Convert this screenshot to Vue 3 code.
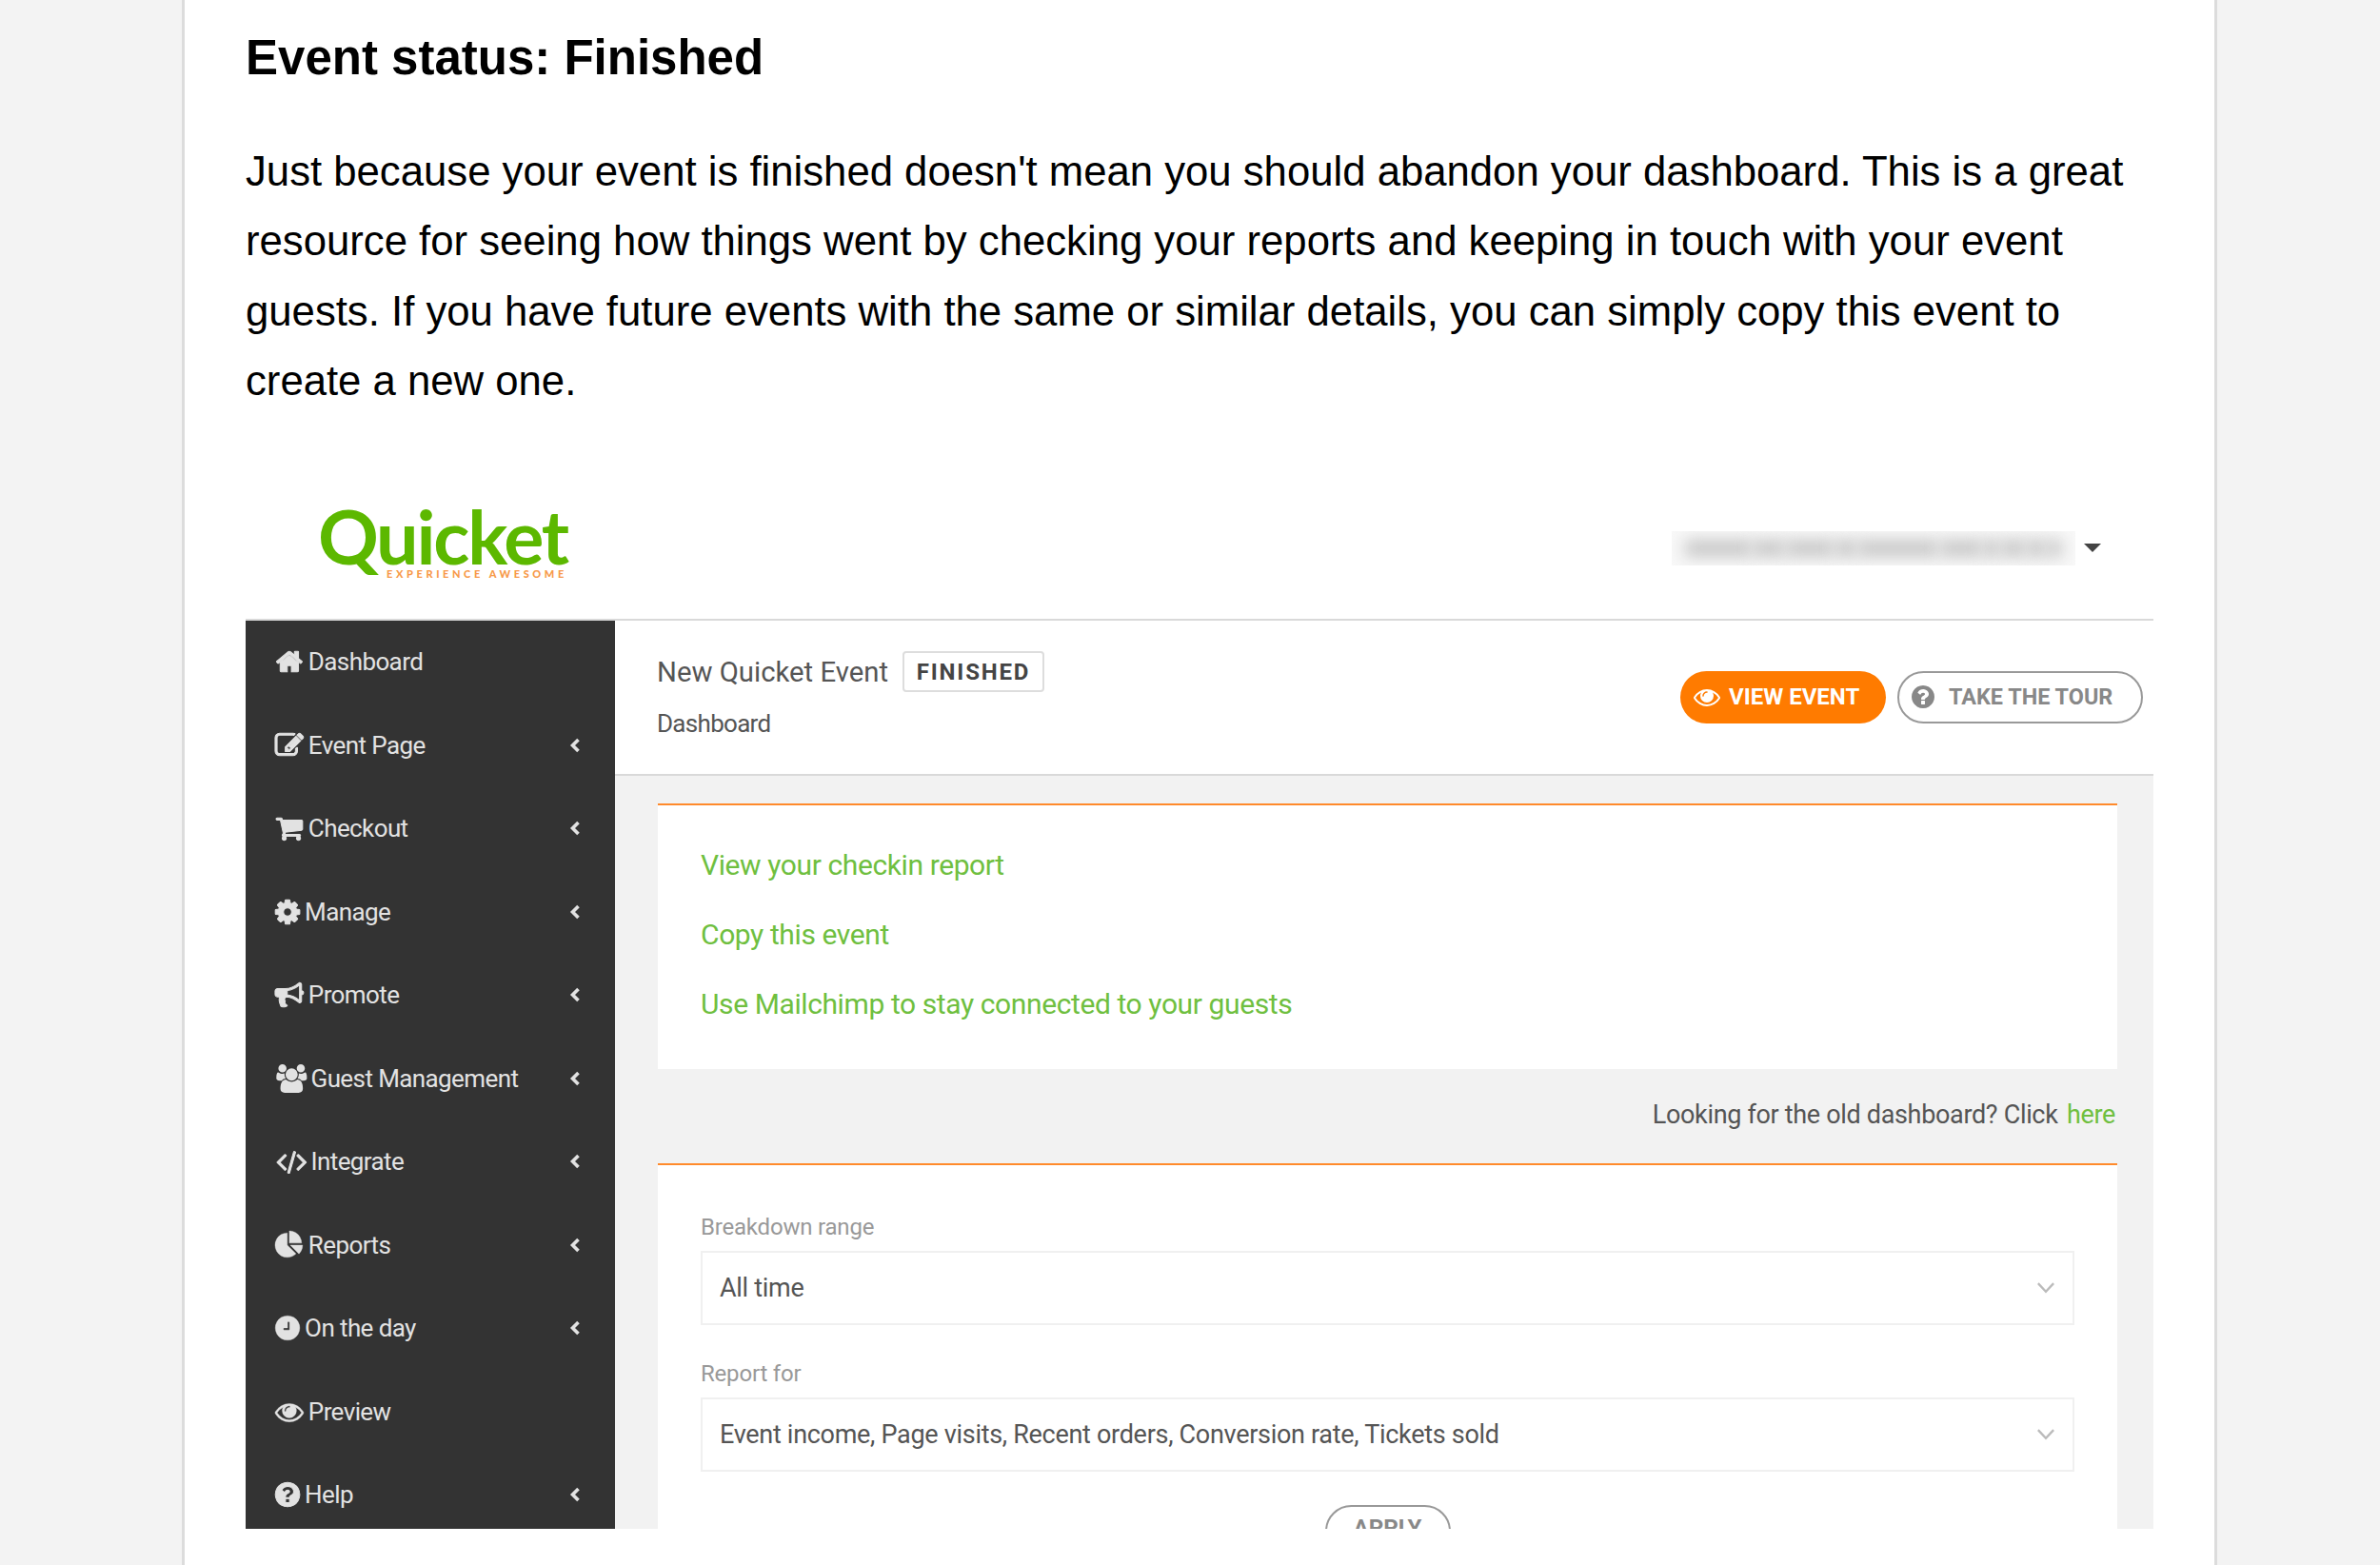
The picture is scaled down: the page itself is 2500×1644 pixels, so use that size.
<script setup>
const P = {
  home: 'M1472 992v480q0 26-19 45t-45 19h-384v-384h-256v384h-384q-26 0-45-19t-19-45v-480q0-1 .5-3t.5-3l575-474 575 474q1 2 1 6zm223-69l-62 74q-8 9-21 11h-3q-13 0-21-7l-692-577-692 577q-12 8-24 7-13-2-21-11l-62-74q-8-10-7-23.5t11-21.5l719-599q32-26 76-26t76 26l244 204v-195q0-14 9-23t23-9h192q14 0 23 9t9 23v408l219 182q10 8 11 21.5t-7 23.5z',
  edit: 'M888 1184l116-116-152-152-116 116v56h96v96h56zm440-720q-16-16-33 1l-350 350q-17 17-1 33t33-1l350-350q17-17 1-33zm80 594v190q0 119-84.5 203.5t-203.5 84.5h-832q-119 0-203.5-84.5t-84.5-203.5v-832q0-119 84.5-203.5t203.5-84.5h832q63 0 117 25 15 7 18 23 3 17-9 29l-49 49q-14 14-32 8-23-6-45-6h-832q-66 0-113 47t-47 113v832q0 66 47 113t113 47h832q66 0 113-47t47-113v-126q0-13 9-22l64-64q15-15 35-7t20 29zm-96-738l288 288-672 672h-288v-288zm444 132l-92 92-288-288 92-92q28-28 68-28t68 28l152 152q28 28 28 68t-28 68z',
  cart: 'M704 1536q0 52-38 90t-90 38-90-38-38-90 38-90 90-38 90 38 38 90zm896 0q0 52-38 90t-90 38-90-38-38-90 38-90 90-38 90 38 38 90zm128-1088v512q0 24-16.5 42.5t-40.5 21.5l-1044 122q13 60 13 70 0 16-24 64h920q26 0 45 19t19 45-19 45-45 19h-1024q-26 0-45-19t-19-45q0-11 8-31.5t16-36 21.5-40 15.5-29.5l-177-823h-204q-26 0-45-19t-19-45 19-45 45-19h256q16 0 28.5 6.5t19.5 15.5 13 24.5 8 26 5.5 29.5 4.5 26h1201q26 0 45 19t19 45z',
  cog: 'M1152 896q0-106-75-181t-181-75-181 75-75 181 75 181 181 75 181-75 75-181zm512-109v222q0 12-8 23t-20 13l-185 28q-19 54-39 91 35 50 107 138 10 12 10 25t-9 23q-27 37-99 108t-94 71q-12 0-26-9l-138-108q-44 23-91 38-16 136-29 186-7 28-36 28h-222q-14 0-24.5-8.5t-11.5-21.5l-28-184q-49-16-90-37l-141 107q-10 9-25 9-14 0-25-11-126-114-165-168-7-10-7-23 0-12 8-23 15-21 51-66.5t54-70.5q-27-50-41-99l-183-27q-13-2-21-12.5t-8-23.5v-222q0-12 8-23t19-13l186-28q14-46 39-92-40-57-107-138-10-12-10-24 0-10 9-23 26-36 98.5-107.5t94.5-71.5q13 0 26 10l138 107q44-23 91-38 16-136 29-186 7-28 36-28h222q14 0 24.5 8.5t11.5 21.5l28 184q49 16 90 37l142-107q9-9 24-9 13 0 25 10 129 119 165 170 7 8 7 22 0 12-8 23-15 21-51 66.5t-54 70.5q26 50 41 98l183 28q13 2 21 12.5t8 23.5z',
  bullhorn: 'M1664 640q53 0 90.5 37.5t37.5 90.5-37.5 90.5-90.5 37.5v384q0 52-38 90t-90 38q-417-347-812-380-58 19-91 66t-31 100.5 40 92.5q-20 33-23 65.5t6 58 33.5 55 48 50 61.5 50.5q-29 58-111.5 83t-168.5 11.5-132-55.5q-7-23-29.5-87.5t-32-94.5-23-89-15-101 3.5-98.5 22-110.5h-122q-66 0-113-47t-47-113v-192q0-66 47-113t113-47h480q435 0 896-384 52 0 90 38t38 90v384zm-128 604v-954q-394 302-768 343v270q377 42 768 341z',
  users: 'M593 896q-162 5-265 128h-134q-82 0-138-40.5t-56-118.5q0-353 124-353 6 0 43.5 21t97.5 42.5 119 21.5q67 0 133-23-5 37-5 66 0 139 81 256zm1071 637q0 120-73 189.5t-194 69.5h-874q-121 0-194-69.5t-73-189.5q0-53 3.5-103.5t14-109 26.5-108.5 43-97.5 62-81 85.5-53.5 111.5-20q10 0 43 21.5t73 48 107 48 135 21.5 135-21.5 107-48 73-48 43-21.5q61 0 111.5 20t85.5 53.5 62 81 43 97.5 26.5 108.5 14 109 3.5 103.5zm-1024-1277q0 106-75 181t-181 75-181-75-75-181 75-181 181-75 181 75 75 181zm704 384q0 159-112.5 271.5t-271.5 112.5-271.5-112.5-112.5-271.5 112.5-271.5 271.5-112.5 271.5 112.5 112.5 271.5zm576 225q0 78-56 118.5t-138 40.5h-134q-103-123-265-128 81-117 81-256 0-29-5-66 66 23 133 23 59 0 119-21.5t97.5-42.5 43.5-21q124 0 124 353zm-128-609q0 106-75 181t-181 75-181-75-75-181 75-181 181-75 181 75 75 181z',
  code: 'M617 1399l-50 50q-10 10-23 10t-23-10l-466-466q-10-10-10-23t10-23l466-466q10-10 23-10t23 10l50 50q10 10 10 23t-10 23l-393 393 393 393q10 10 10 23t-10 23zm591-1067l-373 1291q-4 13-15.500 19.500t-23.500 2.500l-62-17q-13-4-19.500-15.500t-2.500-24.500l373-1291q4-13 15.500-19.500t23.500-2.500l62 17q13 4 19.500 15.500t2.500 24.500zm657 651l-466 466q-10 10-23 10t-23-10l-50-50q-10-10-10-23t10-23l393-393-393-393q-10-10-10-23t10-23l50-50q10-10 23-10t23 10l466 466q10 10 10 23t-10 23z',
  pie: 'M768 890l546 546q-106 108-247.5 168t-298.5 60q-209 0-385.5-103t-279.5-279.5-103-385.5 103-385.5 279.5-279.5 385.5-103v762zm187 6h773q0 157-60 298.5t-168 247.5zm709-128h-768v-768q209 0 385.5 103t279.5 279.5 103 385.5z',
  clock: 'M1024 544v448q0 14-9 23t-23 9h-320q-14 0-23-9t-9-23v-64q0-14 9-23t23-9h224v-352q0-14 9-23t23-9h64q14 0 23 9t9 23zm640 352q0 209-103 385.5t-279.5 279.5-385.5 103-385.5-103-279.5-279.5-103-385.5 103-385.5 279.5-279.5 385.5-103 385.5 103 279.5 279.5 103 385.5z',
  eye: 'M1664 960q-152-236-381-353 61 104 61 225 0 185-131.5 316.5t-316.5 131.5-316.5-131.5-131.5-316.5q0-121 61-225-229 117-381 353 133 205 333.5 326.5t434.5 121.5 434.5-121.5 333.5-326.5zm-720-384q0-20-14-34t-34-14q-125 0-214.5 89.5t-89.5 214.5q0 20 14 34t34 14 34-14 14-34q0-86 61-147t147-61q20 0 34-14t14-34zm848 384q0 34-20 69-140 230-376.5 368.5t-499.5 138.5-499.5-139-376.5-368q-20-35-20-69t20-69q140-229 376.5-368t499.5-139 499.5 139 376.5 368q20 35 20 69z',
  help: 'M1024 1376v-192q0-14-9-23t-23-9h-192q-14 0-23 9t-9 23v192q0 14 9 23t23 9h192q14 0 23-9t9-23zm256-672q0-88-55.5-163t-138.5-116-170-41q-243 0-371 213-15 24 8 42l132 100q7 6 19 6 16 0 25-12 53-68 86-92 34-24 86-24 48 0 85.5 26t37.5 59q0 38-20 61t-68 45q-63 28-115.5 86.5t-52.5 125.5v36q0 14 9 23t23 9h192q14 0 23-9t9-23q0-19 21.5-49.5t54.5-49.5q32-18 49-28.5t46-35 44.5-48 28-60.5 12.5-81zm384 192q0 209-103 385.5t-279.5 279.5-385.5 103-385.5-103-279.5-279.5-103-385.5 103-385.5 279.5-279.5 385.5-103 385.5 103 279.5 279.5 103 385.5z'
}
const A = { home: 1664, edit: 1664, cart: 1664, cog: 1440, bullhorn: 1664, users: 1824, code: 1824, pie: 1664, clock: 1440, eye: 1664, help: 1440 }
const box = (k) => `${(1792 - A[k]) / 2} 0 ${A[k]} 1792`
const w = (k, s) => `${(A[k] / 1792) * s}px`
const nav = [
  { t: 'Dashboard', i: 'home' }, { t: 'Event Page', i: 'edit', c: 1 }, { t: 'Checkout', i: 'cart', c: 1 },
  { t: 'Manage', i: 'cog', c: 1 }, { t: 'Promote', i: 'bullhorn', c: 1 }, { t: 'Guest Management', i: 'users', c: 1 },
  { t: 'Integrate', i: 'code', c: 1 }, { t: 'Reports', i: 'pie', c: 1 }, { t: 'On the day', i: 'clock', c: 1 },
  { t: 'Preview', i: 'eye' }, { t: 'Help', i: 'help', c: 1 }
]
const links = ['View your checkin report', 'Copy this event', 'Use Mailchimp to stay connected to your guests']
const fields = [
  { l: 'Breakdown range', v: 'All time' },
  { l: 'Report for', v: 'Event income, Page visits, Recent orders, Conversion rate, Tickets sold' }
]
const blobs = [70, 34, 50, 24, 84, 44, 18, 26, 20, 16]
</script>

<template>
  <div class="page">
    <article class="card">
      <h1 class="title">Event status: Finished</h1>
      <p class="lead">Just because your event is finished doesn't mean you should abandon your dashboard. This is a great resource for seeing how things went by checking your reports and keeping in touch with your event guests. If you have future events with the same or similar details, you can simply copy this event to create a new one.</p>
      <section class="shot">
        <header class="top">
          <div class="logo">
            <div class="logo-word">Quicket</div>
            <div class="logo-tag">EXPERIENCE AWESOME</div>
          </div>
          <div class="user">
            <div class="blur"><i v-for="(b, x) in blobs" :key="x" :style="{ width: b + 'px' }"></i></div>
            <span class="caret"></span>
          </div>
        </header>
        <div class="body">
          <aside class="side">
            <div v-for="n in nav" :key="n.t" class="item">
              <svg class="ic" :class="'s-' + n.i" :viewBox="box(n.i)" :style="{ width: w(n.i, 30) }"><path :d="P[n.i]" fill="currentColor" :fill-rule="n.i === 'clock' ? 'evenodd' : 'nonzero'" /></svg>
              <span class="lbl">{{ n.t }}</span>
              <svg v-if="n.c" class="chev" viewBox="0 0 12 16"><path d="M9.500 2 3.500 8l6 6" fill="none" stroke="currentColor" stroke-width="3.600" /></svg>
            </div>
          </aside>
          <main class="main">
            <div class="head">
              <div>
                <div class="ev"><span>New Quicket Event</span><span class="badge">FINISHED</span></div>
                <div class="crumb">Dashboard</div>
              </div>
              <div class="btns">
                <span class="btn on">
                  <svg class="bi" viewBox="0 0 1792 1792"><path :d="P.eye" fill="currentColor" /></svg>VIEW EVENT
                </span>
                <span class="btn off">
                  <svg class="bi" viewBox="0 0 1792 1792"><path :d="P.help" fill="currentColor" /></svg>TAKE THE TOUR
                </span>
              </div>
            </div>
            <div class="content">
              <div class="box links">
                <a v-for="l in links" :key="l" class="lnk">{{ l }}</a>
              </div>
              <div class="old">Looking for the old dashboard? Click <a class="here">here</a></div>
              <div class="box form">
                <div v-for="f in fields" :key="f.l" class="field">
                  <label class="fl">{{ f.l }}</label>
                  <div class="sel">
                    <span>{{ f.v }}</span>
                    <svg class="dn" viewBox="0 0 16 10"><path d="M1.500 1.500 8 8.500l6.500-7" fill="none" stroke="currentColor" stroke-width="1.800" /></svg>
                  </div>
                </div>
                <div class="apply-row"><span class="apply">APPLY</span></div>
              </div>
            </div>
          </main>
        </div>
      </section>
    </article>
  </div>
</template>

<style>
html, body { margin: 0; padding: 0; }
</style>

<style scoped>
.page { width: 2500px; height: 1644px; background: #f3f3f3; overflow: hidden; }
.card {
  box-sizing: border-box; width: 2138px; height: 1644px; margin-left: 191px;
  background: #fff; border-left: 3px solid #dcdcdc; border-right: 3px solid #dcdcdc;
  padding: 0 64px 0 64px; font-family: "Liberation Sans", Arial, sans-serif; color: #000;
}
.title { margin: 0; padding-top: 29px; font-size: 51px; line-height: 64px; font-weight: 700; }
.lead { margin: 50px 0 0; font-size: 43.7px; line-height: 73.4px; }
.shot { margin-top: 62px; height: 1107px; overflow: hidden; font-family: Roboto, Arial, sans-serif; }
.top { height: 153px; display: flex; justify-content: space-between; align-items: flex-start; border-bottom: 2px solid #d9d9d9; box-sizing: border-box; }
.logo { padding: 29px 0 0 76px; color: #5cb800; }
.logo-word { font-family: Lato, Arial, sans-serif; font-weight: 700; font-size: 79px; line-height: 69px; letter-spacing: -2.2px; }
.logo-tag { font-family: Lato, Arial, sans-serif; font-weight: 900; font-size: 11px; line-height: 11px; letter-spacing: 3.6px; color: #f79a4a; margin: 0 0 0 72px; white-space: nowrap; }
.user { display: flex; align-items: center; padding: 59px 55px 0 0; }
.blur { width: 424px; height: 36px; background: #f8f8f8; overflow: hidden; display: flex; align-items: center; justify-content: space-between; padding: 0 14px; box-sizing: border-box; }
.blur i { height: 18px; flex: none; background: #c8c8c8; filter: blur(8px); }
.caret { margin-left: 9px; width: 0; height: 0; border-left: 9px solid transparent; border-right: 9px solid transparent; border-top: 9px solid #444; }
.body { display: flex; height: 954px; overflow: hidden; }
.side { width: 388px; flex: none; background: #333; color: #e2e2e2; }
.item { height: 87.5px; box-sizing: border-box; display: flex; align-items: center; padding: 0 36px 0 32px; }
.ic { height: 30px; flex: none; margin-right: 6px; overflow: visible; }
.ic path { stroke: currentColor; stroke-width: 60px; }
.s-users path { stroke-width: 0; }
.s-eye path, .s-clock path, .s-pie path { stroke-width: 20px; }
.lbl { flex: 1; font-size: 26px; letter-spacing: -.6px; white-space: nowrap; }
.chev { width: 12px; height: 16px; flex: none; }
.main { flex: 1; background: #f2f2f2; min-width: 0; }
.head { height: 163px; box-sizing: border-box; background: #fff; border-bottom: 2px solid #d9d9d9; padding: 32px 11px 0 44px; display: flex; justify-content: space-between; }
.ev { display: flex; align-items: center; gap: 15px; font-size: 29.300px; color: #555; height: 44px; }
.badge { box-sizing: border-box; height: 43px; width: 149px; display: flex; align-items: center; justify-content: center; border: 2px solid #ddd; border-radius: 4px; font-size: 24px; font-weight: 700; letter-spacing: 1.8px; color: #444; }
.crumb { margin-top: 12px; font-size: 26px; letter-spacing: -.7px; line-height: 40px; color: #555; }
.btns { display: flex; gap: 12px; padding-top: 21px; }
.btn { box-sizing: border-box; height: 55px; border-radius: 28px; display: flex; align-items: center; font-weight: 700; white-space: nowrap; }
.on { width: 216px; background: #ff7b00; color: #fff; padding-left: 14px; font-size: 24px; }
.off { width: 258px; border: 2px solid #999; color: #888; padding-left: 11px; font-size: 23.4px; }
.bi { width: 28px; height: 28px; margin-right: 9px; flex: none; }
.off .bi { margin-right: 13px; }
.content { padding: 29px 38px 0 45px; }
.box { background: #fff; border-top: 2px solid #ff8a2b; }
.links { height: 279px; box-sizing: border-box; padding: 41.500px 45px 0; display: flex; flex-direction: column; gap: 29px; }
.lnk { font-size: 30px; line-height: 44px; color: #6fbf40; letter-spacing: -.4px; }
.old { height: 99px; box-sizing: border-box; padding: 26.500px 2px 0 0; text-align: right; font-size: 27px; line-height: 44px; color: #555; letter-spacing: -.33px; }
.here { color: #6fbf40; margin-left: 3px; }
.form { padding: 49px 45px 0; }
.field { margin-bottom: 35px; }
.field:last-of-type { margin-bottom: 15px; }
.fl { display: block; font-size: 24px; line-height: 32px; color: #999; letter-spacing: -.2px; }
.sel { box-sizing: border-box; height: 78px; margin-top: 9px; border: 2px solid #f0f0f0; padding: 0 18px 0 18px; display: flex; align-items: center; justify-content: space-between; font-size: 27px; color: #555; letter-spacing: -.3px; }
.dn { width: 20px; height: 13px; color: #bbb; }
.apply-row { display: flex; justify-content: center; }
.apply { box-sizing: border-box; width: 132px; height: 55px; border: 2px solid #999; border-radius: 28px; text-align: center; font-size: 24px; font-weight: 700; line-height: 44px; color: #888; }
</style>
